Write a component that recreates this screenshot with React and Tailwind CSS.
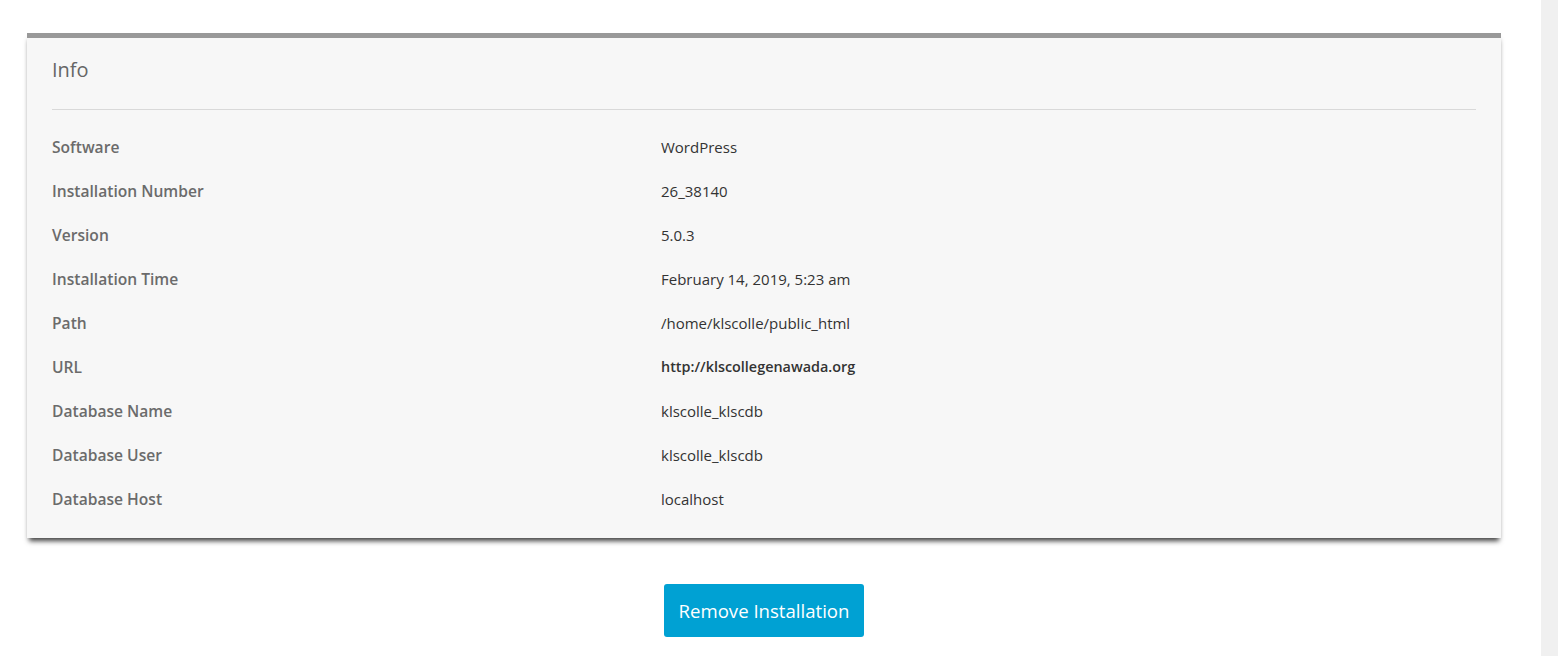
const rows = [
  ['Software', 'WordPress'],
  ['Installation Number', '26_38140'],
  ['Version', '5.0.3'],
  ['Installation Time', 'February 14, 2019, 5:23 am'],
  ['Path', '/home/klscolle/public_html'],
  ['URL', 'http://klscollegenawada.org', true],
  ['Database Name', 'klscolle_klscdb'],
  ['Database User', 'klscolle_klscdb'],
  ['Database Host', 'localhost'],
]

export default function App() {
  return (
    <div className="flex h-[656px] w-[1558px] overflow-hidden bg-white font-['Open_Sans',sans-serif]">
      <div className="w-[1528px] shrink-0 px-[27px] pt-[33px]">
        <div className="border-t-[5px] border-[#999999] bg-[#f7f7f7] px-[25px] pb-[17px] shadow-[0_5px_5px_-2px_rgba(0,0,0,0.75)]">
          <h2 className="pt-[18px] text-[20px] leading-[28px] text-[#666666]">Info</h2>
          <div className="mt-[25px] h-px bg-[#d9d9d9]" />
          <div className="pt-[15px]">
            {rows.map(([label, value, bold]) => (
              <div key={label} className="flex h-[44px] items-center">
                <div className="w-[609px] shrink-0 pt-[2px] text-[15.6px] font-semibold text-[#6b6b6b]">{label}</div>
                <div className={bold ? 'text-[14.4px] font-semibold text-[#333333]' : 'text-[15px] text-[#333333]'}>
                  {value}
                </div>
              </div>
            ))}
          </div>
        </div>
        <div className="mt-[46px] flex justify-center">
          <button className="h-[53px] w-[200px] rounded-[3px] bg-[#00a1d3] text-[18.6px] text-white">
            Remove Installation
          </button>
        </div>
      </div>
      <div className="w-[13px] shrink-0" />
      <div className="h-full w-[17px] shrink-0 bg-[#f0f0f0]" />
    </div>
  )
}
